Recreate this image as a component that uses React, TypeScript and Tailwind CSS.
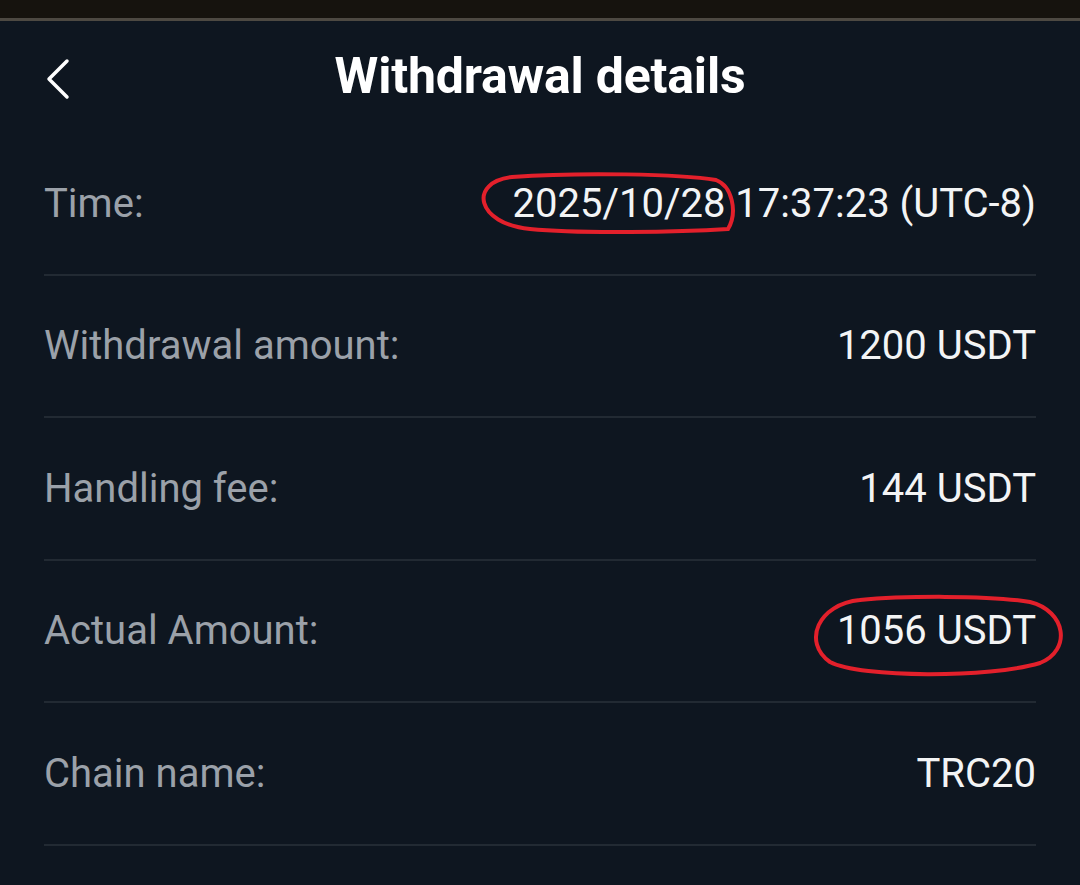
const rows = [
  { label: "Time:", value: "2025/10/28 17:37:23 (UTC-8)" },
  { label: "Withdrawal amount:", value: "1200 USDT" },
  { label: "Handling fee:", value: "144 USDT" },
  { label: "Actual Amount:", value: "1056 USDT" },
  { label: "Chain name:", value: "TRC20" },
];

export default function App() {
  return (
    <div
      className="relative w-[1080px] h-[885px] overflow-hidden bg-[#0e1620] text-white"
      style={{ fontFamily: "Roboto, 'Noto Sans', sans-serif" }}
    >
      <div className="h-[18px] bg-[#16130e]" />
      <div className="h-[3px] bg-[#4d4942]" />

      <div className="relative flex h-[112px] items-center justify-center">
        <svg
          className="absolute left-[44px] top-[37px]"
          width="28"
          height="42"
          viewBox="0 0 28 42"
          fill="none"
          stroke="white"
          strokeWidth="3.5"
          strokeLinecap="round"
          strokeLinejoin="round"
        >
          <path d="M23 3 L5 21 L23 39" />
        </svg>
        <h1 className="text-[50px] font-bold leading-none tracking-[-0.2px] pb-[2px]">Withdrawal details</h1>
      </div>

      <div className="px-[44px]">
        {rows.map((r) => (
          <div
            key={r.label}
            className="flex h-[142.5px] items-center justify-between border-b-2 border-[#222a33] pt-[1px]"
          >
            <span className="text-[40px] leading-none text-[#9ba1a9]">{r.label}</span>
            <span className="text-[40px] leading-none text-[#f3f4f5]">{r.value}</span>
          </div>
        ))}
      </div>

      {/* hand-drawn red annotations */}
      <svg
        className="pointer-events-none absolute left-0 top-0"
        width="1080"
        height="885"
        fill="none"
        stroke="#e3202b"
        strokeWidth="4"
        strokeLinecap="round"
      >
        <path d="M512 177 C 468 182, 476 224, 530 229 C 580 234, 680 232, 728 229 C 738 212, 732 186, 716 180 C 680 174, 580 172, 512 177" />
        <path d="M860 600 C 818 604, 802 642, 830 662 C 860 678, 990 678, 1040 663 C 1072 650, 1066 611, 1030 602 C 990 595, 900 596, 860 600" />
      </svg>
    </div>
  );
}
